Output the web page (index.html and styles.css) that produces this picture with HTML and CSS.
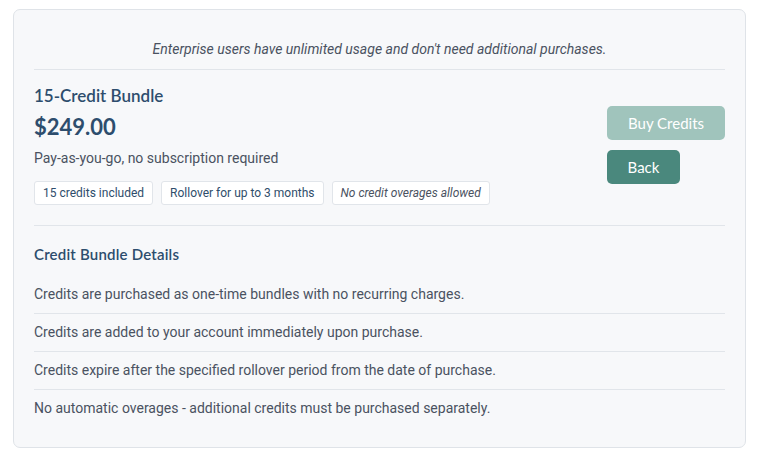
FILE: index.html
```html
<!DOCTYPE html>
<html>
<head>
<meta charset="utf-8">
<link rel="stylesheet" href="styles.css">
</head>
<body>
<div class="page">
  <div class="card">
    <p class="note">Enterprise users have unlimited usage and don't need additional purchases.</p>
    <div class="bundle">
      <div class="info">
        <h2 class="title">15-Credit Bundle</h2>
        <div class="price">$249.00</div>
        <p class="desc">Pay-as-you-go, no subscription required</p>
        <div class="tags">
          <span class="tag">15 credits included</span>
          <span class="tag">Rollover for up to 3 months</span>
          <span class="tag tag-muted">No credit overages allowed</span>
        </div>
      </div>
      <div class="actions">
        <button class="btn btn-disabled">Buy Credits</button>
        <button class="btn btn-primary">Back</button>
      </div>
    </div>
    <h3 class="details-title">Credit Bundle Details</h3>
    <ul class="details">
      <li>Credits are purchased as one-time bundles with no recurring charges.</li>
      <li>Credits are added to your account immediately upon purchase.</li>
      <li>Credits expire after the specified rollover period from the date of purchase.</li>
      <li>No automatic overages - additional credits must be purchased separately.</li>
    </ul>
  </div>
</div>
</body>
</html>
```

FILE: styles.css
```css
* { box-sizing: border-box; }
html, body { margin: 0; padding: 0; background: #ffffff; }
body { font-family: Roboto, "Liberation Sans", sans-serif; color: #4a5261; }
.page { padding: 9px 14px 15px 13px; }
.card {
  background: #f7f8fa;
  border: 1px solid #dfe3e8;
  border-radius: 7px;
  padding: 20px 20px 20px;
}
.note {
  margin: 0;
  padding: 9px 0 10px;
  border-bottom: 1px solid #e1e5ea;
  text-align: center;
  font-style: italic;
  font-size: 14px;
  line-height: 20px;
  color: #4a5261;
}
.bundle {
  display: flex;
  align-items: center;
  justify-content: space-between;
  padding: 14px 0 20px;
  border-bottom: 1px solid #e1e5ea;
}
.title {
  margin: 0;
  font-family: Lato, "Open Sans", sans-serif;
  font-weight: 600;
  font-size: 17px;
  line-height: 24px;
  color: #2d4d6d;
}
.price {
  margin-top: 4px;
  font-family: Lato, "Open Sans", sans-serif;
  font-weight: 700;
  font-size: 22px;
  line-height: 30px;
  color: #2d4d6d;
}
.desc {
  margin: 6px 0 0;
  font-size: 14px;
  line-height: 20px;
  color: #4a5261;
}
.tags { display: flex; gap: 8px; margin-top: 13px; }
.tag {
  display: inline-block;
  height: 24px;
  line-height: 22px;
  padding: 0 8px;
  background: #ffffff;
  border: 1px solid #e1e5ea;
  border-radius: 3px;
  font-size: 12px;
  color: #2f4d6b;
}
.tag-muted { font-style: italic; color: #4a5261; }
.actions { display: flex; flex-direction: column; align-items: flex-start; gap: 10px; }
.btn {
  height: 34px;
  padding: 0 20px;
  border: none;
  border-radius: 5px;
  font-family: Lato, "Open Sans", sans-serif;
  font-size: 15px;
  color: #ffffff;
}
.btn-disabled { background: #a0c4bc; width: 118px; }
.btn-primary { background: #4a887d; width: 73px; }
.details-title {
  margin: 17px 0 0;
  font-family: Lato, "Open Sans", sans-serif;
  font-weight: 600;
  font-size: 15px;
  line-height: 22px;
  letter-spacing: 0.2px;
  color: #2d4d6d;
}
.details { list-style: none; margin: 11px 0 0; padding: 0; }
.details li {
  padding: 8px 0 9px;
  font-size: 14px;
  line-height: 20px;
  color: #4a5261;
  border-bottom: 1px solid #e1e5ea;
}
.details li:last-child { border-bottom: none; }
```
